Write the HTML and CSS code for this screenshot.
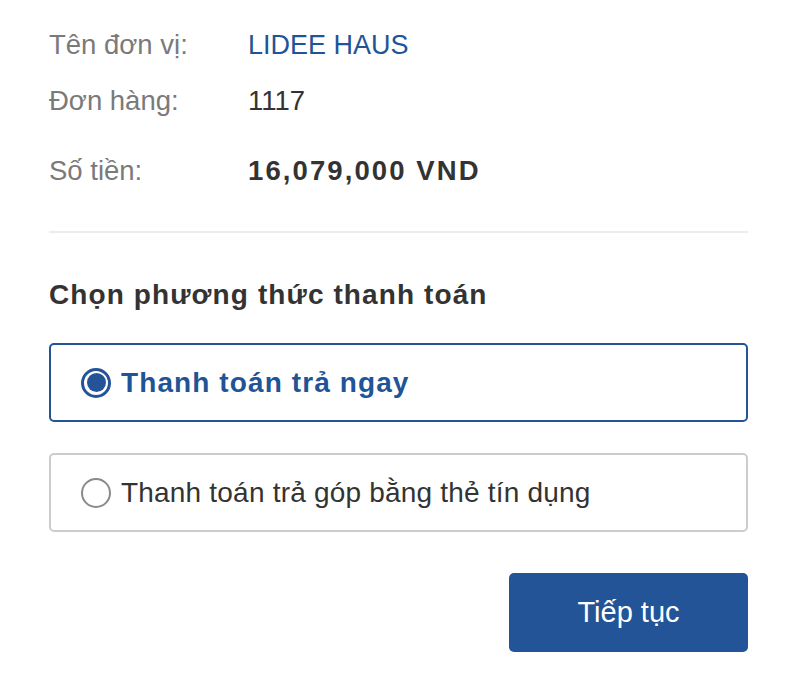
FILE: index.html
```html
<!DOCTYPE html>
<html>
    <head>
        <title>Thanh toán</title>
        <meta charset="UTF-8">
        <link rel="stylesheet" href="styles.css">
    </head>
    <body>
        <div class="payPage">
            <div class="infoRow">
                <span class="infoLabel">Tên đơn vị:</span>
                <span class="infoValue merchant">LIDEE HAUS</span>
            </div>
            <div class="infoRow">
                <span class="infoLabel">Đơn hàng:</span>
                <span class="infoValue">1117</span>
            </div>
            <div class="infoRow amountRow">
                <span class="infoLabel">Số tiền:</span>
                <span class="infoValue amount">16,079,000 VND</span>
            </div>

            <div class="divider"></div>

            <h2 class="methodTitle">Chọn phương thức thanh toán</h2>

            <label class="methodOption selected">
                <input type="radio" name="method" checked>
                <span class="radioMark"></span>
                <span class="methodText">Thanh toán trả ngay</span>
            </label>
            <label class="methodOption">
                <input type="radio" name="method">
                <span class="radioMark"></span>
                <span class="methodText">Thanh toán trả góp bằng thẻ tín dụng</span>
            </label>

            <div class="actions">
                <button class="nextButton">Tiếp tục</button>
            </div>
        </div>
    </body>
</html>
```

FILE: styles.css
```css
body
{
	margin:0px;
	padding:0px;
	background-color:white;
	font-family:"Liberation Sans", Arial, sans-serif;
}

.payPage
{
	width:699px;
	padding:25px 0px 0px 49px;
}

.infoRow
{
	display:flex;
	height:40px;
	line-height:40px;
	font-size:27.5px;
	margin-bottom:16px;
}

.amountRow
{
	margin-top:30px;
	margin-bottom:0px;
}

.infoLabel
{
	width:199px;
	color:#7a7a7a;
}

.infoValue
{
	color:#333333;
}

.merchant
{
	color:#1f5497;
	font-size:27px;
}

.amount
{
	font-weight:bold;
	letter-spacing:2.1px;
}

.divider
{
	height:2px;
	background-color:#ececec;
	margin-top:40px;
}

.methodTitle
{
	margin:42px 0px 28px 0px;
	height:40px;
	line-height:40px;
	font-size:28px;
	font-weight:bold;
	letter-spacing:1.1px;
	color:#333333;
}

.methodOption
{
	display:flex;
	align-items:center;
	height:75px;
	padding:0px 30px;
	border:2px solid #cccccc;
	border-radius:5px;
	margin-bottom:31px;
	font-size:28px;
	letter-spacing:0.2px;
	color:#333333;
	cursor:pointer;
}

.methodOption input
{
	display:none;
}

.radioMark
{
	width:30px;
	height:30px;
	border:2px solid #8a8a8a;
	border-radius:50%;
	box-sizing:border-box;
	margin-right:10px;
	display:flex;
	align-items:center;
	justify-content:center;
	flex-shrink:0;
}

.selected
{
	border-color:#245497;
}

.selected .radioMark
{
	border:3px solid #245497;
}

.selected .radioMark::after
{
	content:"";
	width:19px;
	height:19px;
	border-radius:50%;
	background-color:#245497;
}

.selected .methodText
{
	color:#1f5497;
	font-weight:bold;
	letter-spacing:1.1px;
}

.actions
{
	display:flex;
	justify-content:flex-end;
	margin-top:41px;
}

.nextButton
{
	width:239px;
	height:79px;
	border:none;
	border-radius:5px;
	background-color:#225497;
	color:white;
	font-family:"Liberation Sans", Arial, sans-serif;
	font-size:29px;
}
```
